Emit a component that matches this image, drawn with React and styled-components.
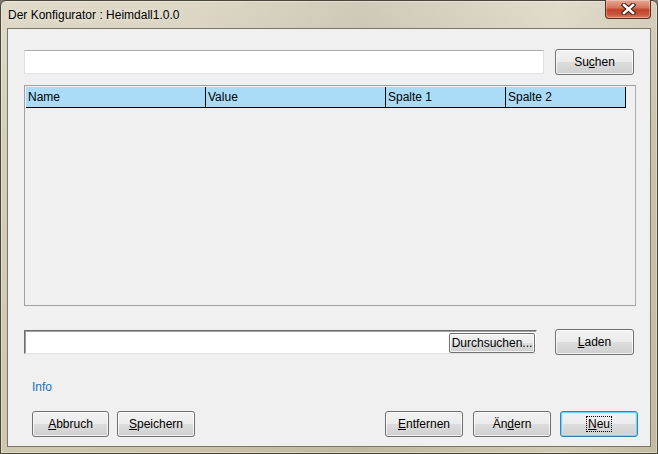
import React from "react";
import styled, { createGlobalStyle, css } from "styled-components";

const GlobalStyle = createGlobalStyle`
  html, body {
    margin: 0;
    padding: 0;
    background: #7d7a72;
  }
  body {
    font-family: "Liberation Sans", Arial, sans-serif;
    font-size: 12px;
    color: #000;
  }
`;

const Window = styled.div`
  box-sizing: border-box;
  width: 658px;
  height: 454px;
  border: 1px solid #4a4638;
  border-radius: 6px 6px 0 0;
  background:
    linear-gradient(90deg, rgba(255,255,255,0.08) 0%, rgba(0,0,0,0) 30%, rgba(0,0,0,0.06) 55%, rgba(255,255,255,0.12) 85%, rgba(0,0,0,0.04) 100%),
    linear-gradient(180deg, #ddd7c5 0%, #d2cab3 30%, #cbc2a9 100%);
  padding: 0 6px 6px 6px;
  display: flex;
  flex-direction: column;
  box-shadow: inset 0 0 0 1px rgba(255,255,255,0.35);
`;

const TitleBar = styled.div`
  height: 27px;
  display: flex;
  align-items: flex-start;
  justify-content: space-between;
`;

const Title = styled.div`
  padding: 7px 0 0 1px;
  font-size: 12px;
  line-height: 14px;
  color: #000;
  text-shadow: 0 0 6px rgba(255,255,255,0.8);
`;

const CloseButton = styled.div`
  box-sizing: border-box;
  width: 46px;
  height: 19px;
  margin-top: -1px;
  border: 1px solid #5b2a1e;
  border-top: none;
  border-radius: 0 0 4px 4px;
  background: linear-gradient(180deg, #e7a893 0%, #d57a61 40%, #c04328 55%, #c9563a 80%, #dd8064 100%);
  box-shadow: inset 0 0 0 1px rgba(255,255,255,0.3);
  display: flex;
  align-items: center;
  justify-content: center;
`;

const Client = styled.div`
  flex: 1;
  border: 1px solid #7a7668;
  background: #f0f0f0;
  padding: 20px 0 0 16px;
  display: flex;
  flex-direction: column;
`;

const Row = styled.div`
  display: flex;
  align-items: center;
  height: 26px;
  gap: ${(p) => p.$gap || 0}px;
  margin-top: ${(p) => p.$top || 0}px;
`;

const TextBox = styled.div`
  box-sizing: border-box;
  width: ${(p) => p.$w}px;
  height: 24px;
  background: #fff;
  border: 1px solid #e2e3ea;
  border-top-color: #abadb3;
  border-left-color: #dbdfe6;
`;

const PathBox = styled.div`
  box-sizing: border-box;
  width: ${(p) => p.$w}px;
  height: 24px;
  background: #fff;
  border-top: 1px solid #6d6d6d;
  border-left: 1px solid #6d6d6d;
  border-bottom: 1px solid #e3e3e3;
  border-right: 1px solid #f0f0f0;
  box-shadow: inset 1px 1px 0 #a0a0a0;
  display: flex;
  justify-content: flex-end;
  align-items: center;
  padding: 2px 1px 0 0;
`;

const buttonBase = css`
  box-sizing: border-box;
  height: 26px;
  border: 1px solid #707070;
  border-radius: 3px;
  background: linear-gradient(180deg, #f2f2f2 0%, #ebebeb 50%, #dddddd 50%, #cfcfcf 100%);
  box-shadow: inset 0 0 0 1px rgba(255,255,255,0.75);
  display: flex;
  align-items: center;
  justify-content: center;
  font-family: "Liberation Sans", Arial, sans-serif;
  font-size: 12px;
  color: #000;
  padding: 0 0 1px 0;
`;

const Button = styled.div`
  ${buttonBase}
  width: ${(p) => p.$w || 78}px;
  margin-left: ${(p) => p.$ml || 0}px;
  ${(p) =>
    p.$default &&
    css`
      border-color: #3c7fb1;
      box-shadow: inset 0 0 0 1px #6fd2f7, inset 0 0 0 2px rgba(190, 235, 252, 0.7);
    `}
`;

const SmallButton = styled.div`
  ${buttonBase}
  width: 86px;
  height: 20px;
  border-radius: 2px;
`;

const Focus = styled.span`
  outline: 1px dotted #000;
  outline-offset: 0;
  padding: 0 1px;
  line-height: 14px;
`;

const Table = styled.div`
  box-sizing: border-box;
  width: 612px;
  height: 221px;
  margin-top: 10px;
  border: 1px solid #a0a0a0;
  border-right-color: #a9a9a9;
  padding: 1px;
  background: #f0f0f0;
`;

const Header = styled.div`
  display: flex;
  width: 600px;
  height: 20px;
  background: #aadcf8;
  border-bottom: 1px solid #000;
`;

const HeaderCell = styled.div`
  box-sizing: border-box;
  width: ${(p) => p.$w}px;
  border-right: 1px solid #000;
  padding: 3px 0 0 2px;
  line-height: 14px;
  white-space: nowrap;
`;

const InfoLink = styled.div`
  margin: 25px 0 0 8px;
  line-height: 15px;
  color: #1a73b8;
`;

const ButtonBar = styled.div`
  display: flex;
  justify-content: space-between;
  align-items: center;
  margin: 16px 12px 0 8px;
`;

const Group = styled.div`
  display: flex;
`;

const CloseIcon = () => (
  <svg width="15" height="12" viewBox="0 0 15 12">
    <path d="M3 2 L12 10 M12 2 L3 10" stroke="#3b1a12" strokeWidth="4.6" strokeLinecap="square" fill="none" />
    <path d="M3 2 L12 10 M12 2 L3 10" stroke="#ffffff" strokeWidth="2.6" strokeLinecap="square" fill="none" />
  </svg>
);

export default function App() {
  return (
    <>
      <GlobalStyle />
      <Window>
        <TitleBar>
          <Title>Der Konfigurator : Heimdall1.0.0</Title>
          <CloseButton>
            <CloseIcon />
          </CloseButton>
        </TitleBar>
        <Client>
          <Row $gap={11}>
            <TextBox $w={520} />
            <Button $w={79}>
              Su<u>c</u>hen
            </Button>
          </Row>
          <Table>
            <Header>
              <HeaderCell $w={180}>Name</HeaderCell>
              <HeaderCell $w={180}>Value</HeaderCell>
              <HeaderCell $w={120}>Spalte 1</HeaderCell>
              <HeaderCell $w={120}>Spalte 2</HeaderCell>
            </Header>
          </Table>
          <Row $gap={18} $top={23}>
            <PathBox $w={513}>
              <SmallButton>Durchsuchen...</SmallButton>
            </PathBox>
            <Button $w={79}>
              <u>L</u>aden
            </Button>
          </Row>
          <InfoLink>Info</InfoLink>
          <ButtonBar>
            <Group>
              <Button $w={77}>
                <u>A</u>bbruch
              </Button>
              <Button $ml={8}>
                <u>S</u>peichern
              </Button>
            </Group>
            <Group>
              <Button>
                <u>E</u>ntfernen
              </Button>
              <Button $ml={10}>
                Än<u>d</u>ern
              </Button>
              <Button $ml={9} $default>
                <Focus>
                  <u>N</u>eu
                </Focus>
              </Button>
            </Group>
          </ButtonBar>
        </Client>
      </Window>
    </>
  );
}
